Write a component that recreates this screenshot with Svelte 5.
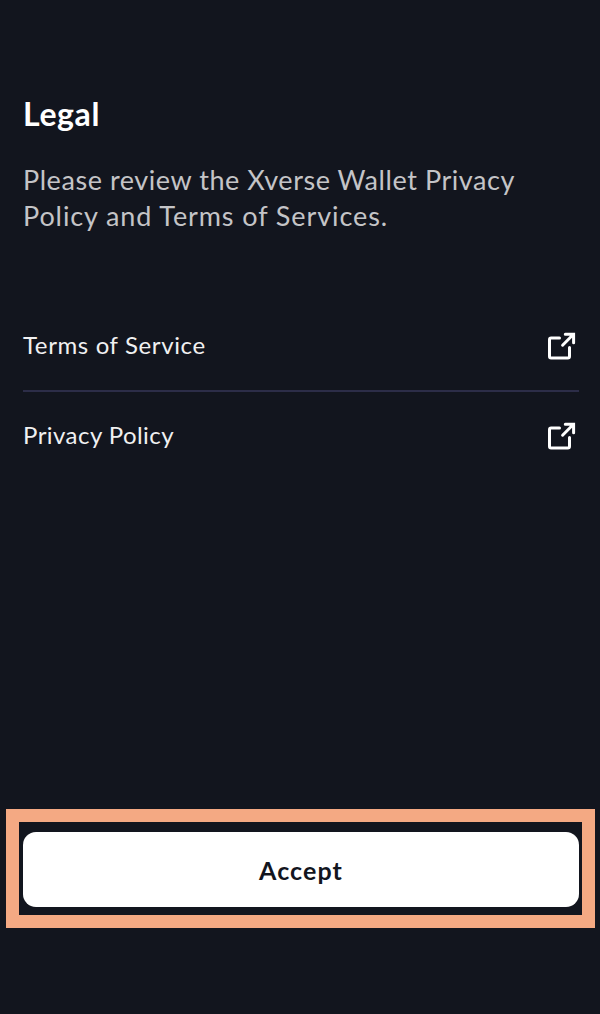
<script>
  const links = [
    { id: 'terms', label: 'Terms of Service' },
    { id: 'privacy', label: 'Privacy Policy' }
  ];

  let accepted = $state(false);
</script>

<main>
  <h1>Legal</h1>
  <p>
    Please review the Xverse Wallet Privacy<br />
    <span>Policy and Terms of Services.</span>
  </p>

  <nav>
    {#each links as link (link.id)}
      <a class={link.id} href={`#${link.id}`}>
        <span>{link.label}</span>
        <svg width="30" height="30" viewBox="0 0 30 30" fill="none" stroke="#fff" stroke-width="3">
          <path d="M13.5 6H5.2Q3.5 6 3.5 7.7V24.3Q3.5 26 5.2 26H21.8Q23.5 26 23.5 24.3V15.5" stroke-linecap="round" />
          <path d="M16.6 13.2L27 2.8M19.3 2.3H27.6V10.8" stroke-linecap="round" />
        </svg>
      </a>
    {/each}
  </nav>

  <div class="highlight">
    <button type="button" disabled={accepted} onclick={() => (accepted = true)}>Accept</button>
  </div>
</main>

<style>
  :global(body) {
    background-color: #12151e;
  }

  main {
    box-sizing: border-box;
    display: flex;
    flex-direction: column;
    height: 1014px;
    padding: 94px 5px 86px 6px;
    font-family: Lato, "Noto Sans", sans-serif;
    color: #fff;
  }

  h1 {
    margin: 0 17px;
    font-size: 32px;
    font-weight: 700;
    line-height: 40px;
    letter-spacing: 0.6px;
  }

  p {
    margin: 28px 17px 0;
    font-size: 27px;
    line-height: 36px;
    letter-spacing: 0.56px;
    white-space: nowrap;
    color: #c4c4c7;
  }

  p span {
    letter-spacing: 0.9px;
  }

  nav {
    margin: 66px 16px 0 17px;
  }

  a {
    box-sizing: border-box;
    display: flex;
    align-items: center;
    justify-content: space-between;
    height: 90px;
    padding-top: 3px;
    font-size: 24px;
    color: #f0f0f1;
    text-decoration: none;
  }

  a + a {
    padding-top: 1px;
    border-top: 2px solid #2c2d48;
  }

  a span {
    padding-bottom: 5px;
  }

  .terms {
    letter-spacing: 0.62px;
  }

  .privacy {
    letter-spacing: 0.45px;
  }

  svg {
    margin-right: 3px;
  }

  .highlight {
    display: flex;
    margin-top: auto;
    height: 75px;
    padding: 10px 3px 8px 4px;
    border: 13px solid #f4a983;
  }

  button {
    flex: 1;
    padding: 0;
    border: none;
    border-radius: 13px;
    background-color: #fff;
    color: #12151e;
    font-family: inherit;
    font-size: 25px;
    font-weight: 700;
    letter-spacing: 1.1px;
    cursor: pointer;
  }
</style>
